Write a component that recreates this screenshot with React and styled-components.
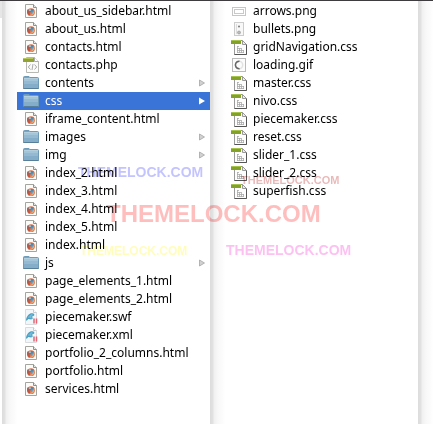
import React from "react";
import styled, { createGlobalStyle, css } from "styled-components";

const GlobalStyle = createGlobalStyle`
  * { box-sizing: border-box; }
  html, body { margin: 0; background: #fff; }
`;

const Browser = styled.main`
  position: relative;
  display: grid;
  grid-template-columns: 2px 15px 1fr 15px 1fr 15px;
  min-height: 100vh;
  border-top: 1px solid #3f3c40;
  overflow: hidden;
  background: #fff;
  font-family: "Noto Sans", "Open Sans", sans-serif;
  font-size: 12px;
  color: #000;
`;

const PreviousColumn = styled.div`
  height: 17px;
  background: #e6e6e6;
`;

const Divider = styled.div`
  background: linear-gradient(90deg, #dcdcdc 0, #e2e2e2 3px, #f0f0f0 4px, #f8f8f8 8px, #fcfcfc 13px, #fff 15px);
`;

const FileList = styled.ul`
  min-width: 0;
  margin: 0;
  padding: 1px 0 0;
  list-style: none;
`;

const FileRow = styled.button`
  display: flex;
  align-items: center;
  gap: 6px;
  width: 100%;
  height: 18px;
  margin: 0;
  padding: 0 4px 0 6px;
  border: 0;
  background: transparent;
  color: inherit;
  font: inherit;
  line-height: 18px;
  text-align: left;
  ${({ $selected }) => $selected && css`
    background: #3974d6;
    color: #fff;
  `}
`;

const FileName = styled.span`
  flex: 1;
  min-width: 0;
  white-space: nowrap;
`;

const Icon = styled.svg`
  display: block;
  flex: none;
  width: ${({ $width }) => $width || 16}px;
  height: 16px;
`;

const Watermark = styled.span`
  position: absolute;
  left: ${({ $x }) => $x}px;
  top: ${({ $y }) => $y}px;
  color: ${({ $color }) => $color};
  font: bold ${({ $size }) => $size}px/1 "Liberation Sans", Arial, sans-serif;
  white-space: nowrap;
  mix-blend-mode: multiply;
  pointer-events: none;
`;

function HtmlIcon() {
  return (
    <Icon viewBox="0 0 16 16" aria-hidden="true">
      <path d="M2.5 1.5h8l3 3v10h-11z" fill="#fbfbf9" stroke="#a5a5a0" />
      <path d="M10.5 1.5v3h3" fill="#e8e8e4" stroke="#8f8f8c" />
      <circle cx="8" cy="9.2" r="3.9" fill="#e0774f" />
      <path d="M4.8 6l1.2 1 2-1.3 2.6.8.5 2.5-1.3 1.2-2.5-1-1.3-.3z" fill="#5585a8" />
      <path d="M4.4 6.2c-.8 2.3-.3 4.7 1.4 6l1.5-.6-1-1.8 1.5-.7-1.6-.8z" fill="#b95543" />
      <path d="M10.9 6.7c1.2 2.2.3 4.6-1.6 5.6-1.2.5-2.3.4-3.3-.1 2.5-.3 4.5-1.6 4.9-5.5z" fill="#eea873" />
      <path d="M6 7l1.4-.6.5.8-1 .8zM8.5 9.2h1.6" fill="#a9ceda" stroke="#a9ceda" strokeWidth=".6" />
    </Icon>
  );
}

function PhpIcon() {
  return (
    <Icon viewBox="0 0 16 16" aria-hidden="true">
      <path d="M3.5.5h8l4 4v11h-12z" fill="#fcfcfb" stroke="#b8b8b5" />
      <path d="M11.5.5v4h4" fill="#fff" stroke="#aaa" />
      <rect y="1" width="11" height="4" fill="#92a334" />
      <path d="M0 1.5h10" stroke="#b5c65b" />
      <path d="M7.5 7.5L5.3 10l2.2 2.5M11.5 7.5l2.2 2.5-2.2 2.5M10 7l-1 6" fill="none" stroke="#aaa" />
    </Icon>
  );
}

function CssIcon() {
  return (
    <Icon viewBox="0 0 16 16" aria-hidden="true">
      <path d="M3.5 1.5h8l4 4v10h-12z" fill="#fdfdfd" stroke="#999" />
      <path d="M15.5 5v10.5h-12" fill="none" stroke="#555" />
      <path d="M11.5 1.5l4 4h-4z" fill="#eee" stroke="#999" />
      <rect y="1" width="10" height="4" fill="#84a129" />
      <path d="M0 1.5h10" stroke="#a6c34e" />
      <path d="M6 7.5h2m-2 2h4m-4 2h7m-7 2h7M6.5 7v7m2-5v5m2-5v5m2-3v3" stroke="#aaa" strokeWidth=".8" />
    </Icon>
  );
}

function FolderIcon() {
  return (
    <Icon viewBox="0 0 16 16" aria-hidden="true">
      <path d="M.5 2.5q0-1 1-1H6l1 1h7.5q1 0 1 1v10h-15z" fill="#78a5c1" stroke="#6f9bb6" />
      <path d="M1 4h14v3H1z" fill="#a3c5da" />
      <path d="M1 6h14v3H1z" fill="#94b9d1" />
      <path d="M1 9h14v4H1z" fill="#83adc8" />
      <path d="M1 3.5h14" stroke="#b4d0df" />
      <path d="M.5 13.5h15" stroke="#587f99" />
    </Icon>
  );
}

function FlashIcon() {
  return (
    <Icon viewBox="0 0 16 16" aria-hidden="true">
      <path d="M2.5.5h8l3 3v12h-11z" fill="#f3f6f8" stroke="#d8dcdf" />
      <path d="M10.5.5v3h3" fill="#fff" stroke="#c7cbd0" />
      <path d="M3 10.5c1-3.8 3.2-6.4 6.3-6.2 1.7.2 2.4 1.3 1.9 2.3L8.5 8l1.8 1-2 1.5-3-.4L3.5 12z" fill="#4a9fc6" />
      <path d="M5 8.5l3.5-3 1 .5-3 2.2 2.2 1" fill="none" stroke="#79bdd5" />
      <path d="M11 9.5v5M13.5 9.5v5" stroke="#e66575" strokeWidth="1.5" />
    </Icon>
  );
}

function ArrowsImageIcon() {
  return (
    <Icon viewBox="0 0 16 16" aria-hidden="true">
      <rect x="1.5" y="4.5" width="13" height="8" fill="#fff" stroke="#c6c6c6" />
      <rect x="3.5" y="6.5" width="9" height="4" fill="#fff" stroke="#c9c9c9" />
    </Icon>
  );
}

function BulletsImageIcon() {
  return (
    <Icon viewBox="0 0 16 16" aria-hidden="true">
      <rect x="3.5" y="1.5" width="9" height="13" fill="#f8f8f8" stroke="#ccc" />
      <path d="M5.5 3v10" stroke="#ddd" />
      <circle cx="8" cy="5.5" r="1" fill="#777" />
      <circle cx="8" cy="11.5" r="1.5" fill="#bbb" stroke="#999" strokeWidth=".7" />
    </Icon>
  );
}

function LoadingImageIcon() {
  return (
    <Icon viewBox="0 0 16 16" aria-hidden="true">
      <rect x="1.5" y="1.5" width="13" height="13" fill="#fcfcfc" stroke="#bbb" />
      <circle cx="8" cy="8" r="3.7" fill="none" stroke="#e3e3e3" strokeWidth="1.5" />
      <path d="M8.5 4.2C5 4 3.5 7.5 5 10c.8 1.3 2.3 1.8 3.6 1.7" fill="none" stroke="#666" strokeWidth="1.5" />
    </Icon>
  );
}

function Disclosure({ selected }) {
  return (
    <Icon $width={8} viewBox="0 0 8 16" aria-hidden="true">
      {selected ? (
        <path d="M1 4.5l6 3.5-6 3.5z" fill="#fff" />
      ) : (
        <path d="M1.5 5l5 3-5 3z" fill="#d2d2d2" stroke="#a5a5a5" strokeWidth=".8" />
      )}
    </Icon>
  );
}

const icons = {
  html: HtmlIcon,
  php: PhpIcon,
  css: CssIcon,
  folder: FolderIcon,
  flash: FlashIcon,
  arrows: ArrowsImageIcon,
  bullets: BulletsImageIcon,
  loading: LoadingImageIcon,
};

const siteFiles = [
  ["about_us_sidebar.html", "html"],
  ["about_us.html", "html"],
  ["contacts.html", "html"],
  ["contacts.php", "php"],
  ["contents", "folder"],
  ["css", "folder"],
  ["iframe_content.html", "html"],
  ["images", "folder"],
  ["img", "folder"],
  ["index_2.html", "html"],
  ["index_3.html", "html"],
  ["index_4.html", "html"],
  ["index_5.html", "html"],
  ["index.html", "html"],
  ["js", "folder"],
  ["page_elements_1.html", "html"],
  ["page_elements_2.html", "html"],
  ["piecemaker.swf", "flash"],
  ["piecemaker.xml", "flash"],
  ["portfolio_2_columns.html", "html"],
  ["portfolio.html", "html"],
  ["services.html", "html"],
];

const cssFiles = [
  ["arrows.png", "arrows"],
  ["bullets.png", "bullets"],
  ["gridNavigation.css", "css"],
  ["loading.gif", "loading"],
  ["master.css", "css"],
  ["nivo.css", "css"],
  ["piecemaker.css", "css"],
  ["reset.css", "css"],
  ["slider_1.css", "css"],
  ["slider_2.css", "css"],
  ["superfish.css", "css"],
];

const watermarks = [
  { x: 78, y: 164, size: 14, color: "rgba(90, 90, 255, 0.36)" },
  { x: 241, y: 174, size: 11, color: "rgba(190, 50, 50, 0.34)" },
  { x: 106, y: 201, size: 24, color: "rgba(255, 65, 65, 0.34)" },
  { x: 80, y: 244, size: 12, color: "rgba(255, 250, 90, 0.4)" },
  { x: 226, y: 242, size: 14, color: "rgba(245, 70, 215, 0.34)" },
];

function FileColumn({ label, files, selected }) {
  return (
    <FileList aria-label={label}>
      {files.map(([name, kind]) => {
        const Glyph = icons[kind];
        const active = name === selected;
        return (
          <li key={name}>
            <FileRow type="button" $selected={active} aria-pressed={active}>
              <Glyph />
              <FileName>{name}</FileName>
              {kind === "folder" && <Disclosure selected={active} />}
            </FileRow>
          </li>
        );
      })}
    </FileList>
  );
}

export default function App() {
  return (
    <>
      <GlobalStyle />
      <Browser>
        <PreviousColumn />
        <Divider />
        <FileColumn label="Site files" files={siteFiles} selected="css" />
        <Divider />
        <FileColumn label="css" files={cssFiles} />
        <Divider />
        {watermarks.map(({ x, y, size, color }) => (
          <Watermark key={`${x}-${y}`} $x={x} $y={y} $size={size} $color={color}>
            THEMELOCK.COM
          </Watermark>
        ))}
      </Browser>
    </>
  );
}
